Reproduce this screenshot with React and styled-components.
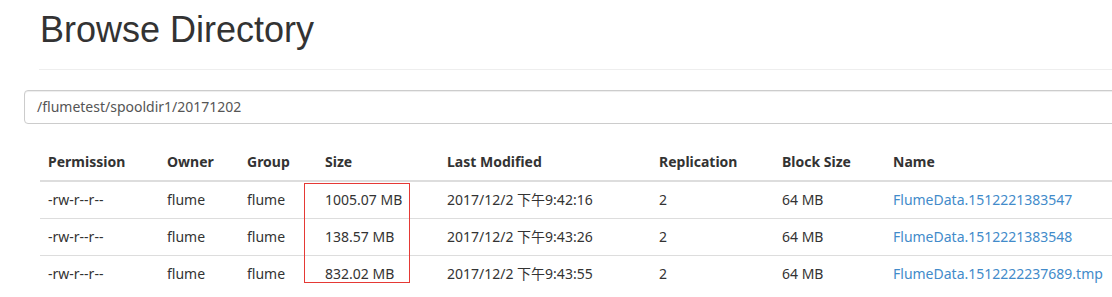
import React from "react";
import styled, { createGlobalStyle } from "styled-components";

const rows = [
  {
    permission: "-rw-r--r--",
    owner: "flume",
    group: "flume",
    size: "1005.07 MB",
    modified: "2017/12/2 下午9:42:16",
    replication: "2",
    blockSize: "64 MB",
    name: "FlumeData.1512221383547",
  },
  {
    permission: "-rw-r--r--",
    owner: "flume",
    group: "flume",
    size: "138.57 MB",
    modified: "2017/12/2 下午9:43:26",
    replication: "2",
    blockSize: "64 MB",
    name: "FlumeData.1512221383548",
  },
  {
    permission: "-rw-r--r--",
    owner: "flume",
    group: "flume",
    size: "832.02 MB",
    modified: "2017/12/2 下午9:43:55",
    replication: "2",
    blockSize: "64 MB",
    name: "FlumeData.1512222237689.tmp",
  },
];

const columns = [
  { key: "permission", label: "Permission", width: 119 },
  { key: "owner", label: "Owner", width: 80 },
  { key: "group", label: "Group", width: 78 },
  { key: "size", label: "Size", width: 122 },
  { key: "modified", label: "Last Modified", width: 212 },
  { key: "replication", label: "Replication", width: 123 },
  { key: "blockSize", label: "Block Size", width: 111 },
  { key: "name", label: "Name", width: 260 },
];

const GlobalStyle = createGlobalStyle`
  html, body {
    margin: 0;
    padding: 0;
    background: #fff;
    overflow: hidden;
  }
  body {
    font-family: "Noto Sans", "Noto Sans CJK SC", sans-serif;
    font-size: 14px;
    color: #333;
  }
`;

const Page = styled.div`
  width: 1180px;
  padding-top: 10px;
`;

const PageHeader = styled.div`
  margin-left: 39px;
  padding-bottom: 9px;
  border-bottom: 1px solid #eee;
  margin-bottom: 20px;
`;

const Title = styled.h1`
  margin: 0 0 10px 1px;
  font-family: "Liberation Sans", Arial, sans-serif;
  font-size: 36px;
  font-weight: 400;
  line-height: 1.1;
  color: #333;
`;

const PathInput = styled.div`
  margin-left: 24px;
  height: 34px;
  box-sizing: border-box;
  padding: 6px 12px;
  border: 1px solid #ccc;
  border-radius: 4px;
  box-shadow: inset 0 1px 1px rgba(0, 0, 0, 0.075);
  color: #555;
  font-size: 14px;
  line-height: 20px;
`;

const TableWrap = styled.div`
  position: relative;
  margin: 20px 0 0 40px;
`;

const Table = styled.table`
  border-collapse: collapse;
  table-layout: fixed;
  width: 1105px;
`;

const Th = styled.th`
  text-align: left;
  font-weight: 700;
  padding: 8px;
  line-height: 20px;
  border-bottom: 2px solid #ddd;
  white-space: nowrap;
`;

const Td = styled.td`
  padding: 8px;
  line-height: 20px;
  border-top: 1px solid #ddd;
  white-space: nowrap;
  tr:first-child > & {
    border-top: 0;
  }
`;

const FileLink = styled.a`
  color: #428bca;
  text-decoration: none;
`;

const Highlight = styled.div`
  position: absolute;
  left: 264px;
  top: 39px;
  width: 106px;
  height: 100px;
  box-sizing: border-box;
  border: 1px solid #e53935;
  pointer-events: none;
`;

export default function App() {
  return (
    <Page>
      <GlobalStyle />
      <PageHeader>
        <Title>Browse Directory</Title>
      </PageHeader>
      <PathInput>/flumetest/spooldir1/20171202</PathInput>
      <TableWrap>
        <Table>
          <colgroup>
            {columns.map((c) => (
              <col key={c.key} style={{ width: c.width }} />
            ))}
          </colgroup>
          <thead>
            <tr>
              {columns.map((c) => (
                <Th key={c.key}>{c.label}</Th>
              ))}
            </tr>
          </thead>
          <tbody>
            {rows.map((row) => (
              <tr key={row.name}>
                {columns.map((c) => (
                  <Td key={c.key}>
                    {c.key === "name" ? (
                      <FileLink href="#">{row.name}</FileLink>
                    ) : (
                      row[c.key]
                    )}
                  </Td>
                ))}
              </tr>
            ))}
          </tbody>
        </Table>
        <Highlight />
      </TableWrap>
    </Page>
  );
}
